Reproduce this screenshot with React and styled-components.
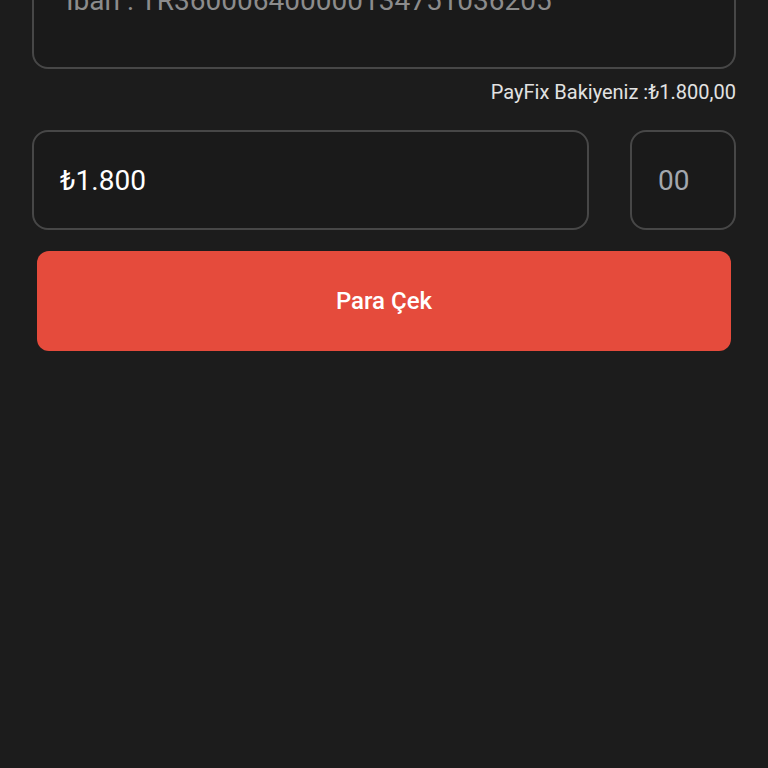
import React from "react";
import styled, { createGlobalStyle } from "styled-components";

const Global = createGlobalStyle`
  html, body {
    margin: 0;
    padding: 0;
    background: #1c1c1c;
    font-family: Roboto, "Noto Sans", "Liberation Sans", sans-serif;
    overflow: hidden;
  }
  #root {
    min-height: 768px;
    background: #1c1c1c;
  }
`;

const Page = styled.div`
  display: flex;
  flex-direction: column;
  padding: 0 32px;
  height: 768px;
  overflow: hidden;
`;

const IbanBox = styled.div`
  box-sizing: border-box;
  margin-top: -40px;
  height: 109px;
  padding: 22px 32px;
  border: 2px solid #474747;
  border-radius: 16px;
  background: #1a1a1a;
  color: #8c8c8c;
  font-size: 28px;
  line-height: 34px;
  white-space: nowrap;
`;

const Balance = styled.div`
  margin-top: 11px;
  text-align: right;
  color: #e2e2e2;
  font-size: 20px;
  line-height: 24px;
`;

const AmountRow = styled.div`
  display: flex;
  gap: 41px;
  margin-top: 26px;
`;

const Field = styled.div`
  box-sizing: border-box;
  height: 100px;
  border: 2px solid #474747;
  border-radius: 16px;
  background: #1a1a1a;
  display: flex;
  align-items: center;
  padding: 0 26px;
  font-size: 28px;
  flex: ${(p) => (p.$grow ? "1 1 auto" : "0 0 106px")};
  color: ${(p) => (p.$muted ? "#a3a7ae" : "#ffffff")};
`;

const SubmitButton = styled.button`
  margin: 21px 5px 0;
  height: 100px;
  border: none;
  border-radius: 12px;
  background: #e54b3c;
  color: #ffffff;
  font-family: Roboto, "Noto Sans", "Liberation Sans", sans-serif;
  font-size: 24px;
  font-weight: 500;
  cursor: pointer;
`;

export default function App() {
  return (
    <>
      <Global />
      <Page>
        <IbanBox>Iban : TR360006400000134751036205</IbanBox>
        <Balance>PayFix Bakiyeniz :₺1.800,00</Balance>
        <AmountRow>
          <Field $grow>₺1.800</Field>
          <Field $muted>00</Field>
        </AmountRow>
        <SubmitButton>Para Çek</SubmitButton>
      </Page>
    </>
  );
}
